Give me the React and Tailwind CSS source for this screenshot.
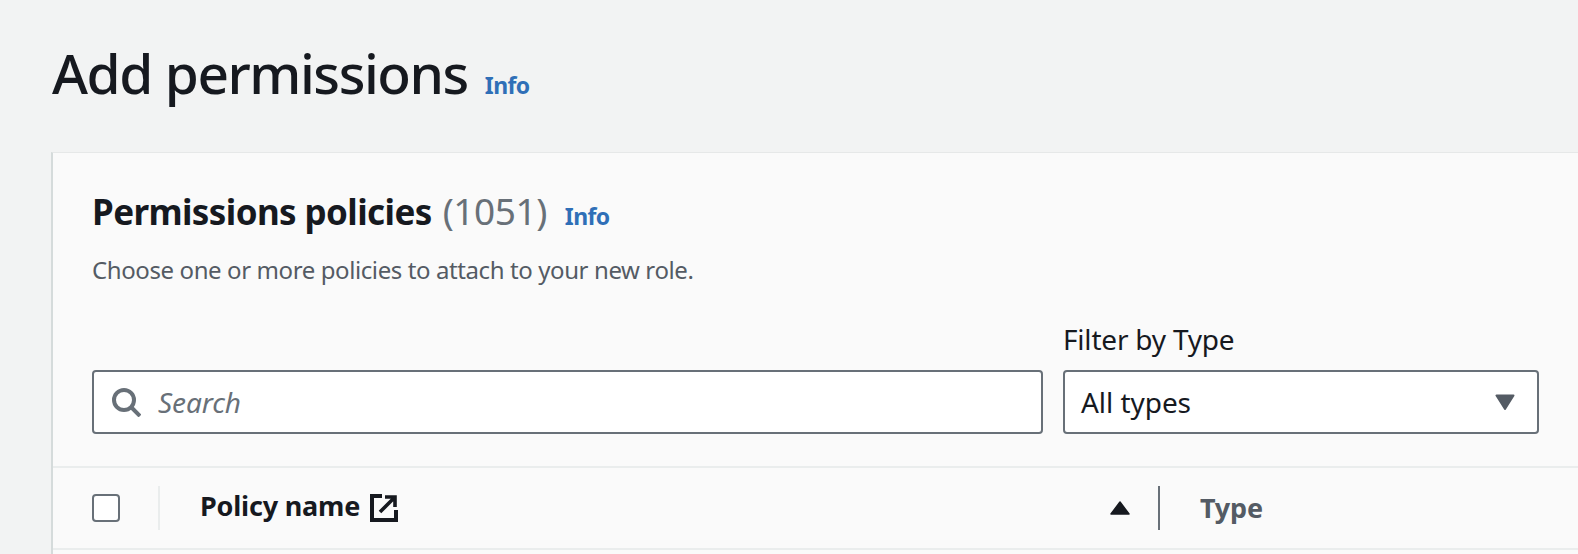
function Info({ className }) {
  return <a className={`font-bold text-[#2f6fb7] ${className}`}>Info</a>;
}

export default function App() {
  return (
    <div className="h-[554px] w-[1578px] overflow-hidden bg-[#f2f3f3] font-['Noto_Sans',sans-serif] text-[#16191f]">
      <div className="flex h-[152px] items-start pl-[52px] pt-[36px]">
        <h1 className="text-[55px] font-medium leading-[74px] tracking-[-1.45px]">Add permissions</h1>
        <Info className="ml-[17px] mt-[34px] text-[23px] leading-[30px] tracking-[-0.6px]" />
      </div>
      <div className="ml-[51px] h-[402px] border-l-2 border-t border-l-[#d5dbdb] border-t-[#e6e8e8] bg-[#fafafa]">
        <div className="px-[39px] pt-[34px]">
          <div className="flex items-baseline">
            <h2 className="text-[35px] font-bold leading-[48px] tracking-[-0.6px]">Permissions policies</h2>
            <span className="ml-[11px] text-[37px] leading-[48px] tracking-[-0.45px] text-[#687078]">(1051)</span>
            <Info className="ml-[18px] text-[23px] tracking-[-0.6px]" />
          </div>
          <p className="mt-[18px] text-[24px] leading-[32px] tracking-[-0.4px] text-[#545b64]">
            Choose one or more policies to attach to your new role.
          </p>
          <div className="mt-[35px] flex items-end gap-[20px]">
            <div className="flex h-[64px] flex-1 items-center rounded-[4px] border-2 border-[#687078] bg-white pl-[17px]">
              <svg viewBox="0 0 30 30" className="h-[30px] w-[30px]" fill="none" stroke="#687078" strokeWidth="4">
                <circle cx="13" cy="13" r="10" />
                <path d="M20 20l9 9" />
              </svg>
              <span className="ml-[17px] text-[28px] italic leading-[36px] tracking-[-0.1px] text-[#687078]">Search</span>
            </div>
            <div className="w-[476px]">
              <div className="mb-[13px] text-[28px] leading-[36px] tracking-[-0.2px]">Filter by Type</div>
              <div className="flex h-[64px] items-center justify-between rounded-[4px] border-2 border-[#687078] bg-white pl-[16px] pr-[22px]">
                <span className="text-[28px] leading-[36px] tracking-[-0.05px]">All types</span>
                <svg viewBox="0 0 20 16" className="h-[16px] w-[20px]">
                  <path d="M1.5 1.5h17L10 15z" fill="#545b64" stroke="#545b64" strokeWidth="2" strokeLinejoin="round" />
                </svg>
              </div>
            </div>
          </div>
        </div>
        <div className="mt-[32px] flex h-[84px] items-center border-y-2 border-[#eaeded] pl-[39px]">
          <div className="h-[28px] w-[28px] rounded-[4px] border-2 border-[#687078] bg-white" />
          <div className="ml-[38px] h-[44px] w-[2px] bg-[#eaeded]" />
          <div className="ml-[40px] flex w-[930px] items-center">
            <span className="-mt-[4px] text-[27px] font-bold leading-[36px] tracking-[-0.2px]">Policy name</span>
            <svg viewBox="0 0 28 28" className="ml-[10px] h-[28px] w-[28px]" fill="none" stroke="#16191f" strokeWidth="4">
              <path d="M12 2H2v24h24V16" />
              <path d="M10 18L24 4M15 3h10v10" strokeWidth="3.6" />
            </svg>
            <svg viewBox="0 0 20 14" className="ml-auto h-[14px] w-[20px]">
              <path d="M10 1L1 13h18z" fill="#16191f" stroke="#16191f" strokeWidth="1.5" strokeLinejoin="round" />
            </svg>
          </div>
          <div className="ml-[28px] h-[44px] w-[2px] bg-[#687078]" />
          <span className="ml-[40px] text-[27px] font-bold leading-[36px] tracking-[-0.2px] text-[#545b64]">Type</span>
        </div>
      </div>
    </div>
  );
}
